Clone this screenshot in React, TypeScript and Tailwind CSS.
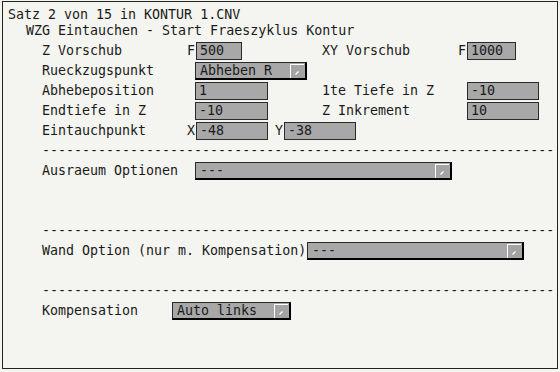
import React from "react";

const F = { fontFamily: '"DejaVu Sans Mono", "Liberation Mono", monospace', fontSize: "13.3px" };

function Input({ value, w }: { value: string; w: string }) {
  return (
    <div className={`h-[18px] ${w} border border-[#2a2a2a] bg-[#a8a8a8] flex items-center pl-[3px] leading-none text-[#1a1a1a]`}>
      {value}
    </div>
  );
}

function Select({ value, w }: { value: string; w: string }) {
  return (
    <div className={`h-[18px] ${w} border border-[#2a2a2a] border-r-2 border-b-2 border-r-black border-b-black bg-[#a8a8a8] flex items-center pl-[4px] leading-none text-[#1a1a1a]`}>
      <span className="flex-1 whitespace-pre">{value}</span>
      <div className="w-[14px] h-[14px] border-l border-t border-l-white border-t-white bg-[#a4a4a4] flex items-end justify-end mr-[1px] mt-[1px]">
        <svg width="13" height="13" viewBox="0 0 13 13">
          <line x1="4.5" y1="9.5" x2="7.5" y2="6.5" stroke="white" strokeWidth="1.3" />
        </svg>
      </div>
    </div>
  );
}

function Dashes() {
  return (
    <div className="h-[20px] flex items-center pl-[39px] overflow-hidden whitespace-pre w-[553px] text-[#1a1a1a] leading-none">
      {"-".repeat(64)}
    </div>
  );
}

function Row({ children }: { children: React.ReactNode }) {
  return <div className="h-[20px] flex items-center whitespace-pre">{children}</div>;
}

export default function App() {
  return (
    <div className="w-[560px] h-[372px] bg-[#f4f4f0] pt-[1px] pl-[2px]" style={F}>
      <div className="w-[556px] h-[368px] border border-[#222] text-[#1a1a1a] flex flex-col pt-[5px]">
        <div className="h-[16px] flex items-center pl-[5px] whitespace-pre leading-none">Satz 2 von 15 in KONTUR 1.CNV</div>
        <div className="h-[16px] flex items-center pl-[23px] whitespace-pre leading-none">WZG Eintauchen - Start Fraeszyklus Kontur</div>
        <div className="h-[2px]" />
        <div className="pl-[39px] flex flex-col leading-none">
          <Row>
            <div className="w-[145px]">Z Vorschub</div>
            <div className="w-[9px]">F</div>
            <Input value="500" w="w-[46px]" />
            <div className="w-[80px]" />
            <div className="w-[136px]">XY Vorschub</div>
            <div className="w-[9px]">F</div>
            <Input value="1000" w="w-[49px]" />
          </Row>
          <Row>
            <div className="w-[153px]">Rueckzugspunkt</div>
            <Select value="Abheben R" w="w-[112px]" />
          </Row>
          <Row>
            <div className="w-[153px]">Abhebeposition</div>
            <Input value="1" w="w-[73px]" />
            <div className="w-[54px]" />
            <div className="w-[145px]">1te Tiefe in Z</div>
            <Input value="-10" w="w-[72px]" />
          </Row>
          <Row>
            <div className="w-[153px]">Endtiefe in Z</div>
            <Input value="-10" w="w-[73px]" />
            <div className="w-[54px]" />
            <div className="w-[145px]">Z Inkrement</div>
            <Input value="10" w="w-[72px]" />
          </Row>
          <Row>
            <div className="w-[145px]">Eintauchpunkt</div>
            <div className="w-[9px]">X</div>
            <Input value="-48" w="w-[72px]" />
            <div className="w-[16px] text-right pr-[1px]">Y</div>
            <Input value="-38" w="w-[72px]" />
          </Row>
        </div>
        <Dashes />
        <div className="pl-[39px] flex flex-col leading-none">
          <Row>
            <div className="w-[153px]">Ausraeum Optionen</div>
            <Select value="---" w="w-[257px]" />
          </Row>
        </div>
        <div className="h-[40px]" />
        <Dashes />
        <div className="pl-[39px] flex flex-col leading-none">
          <Row>
            <div className="w-[265px]">Wand Option (nur m. Kompensation)</div>
            <Select value="---" w="w-[217px]" />
          </Row>
        </div>
        <div className="h-[20px]" />
        <Dashes />
        <div className="pl-[39px] flex flex-col leading-none">
          <Row>
            <div className="w-[130px]">Kompensation</div>
            <Select value="Auto links" w="w-[119px]" />
          </Row>
        </div>
      </div>
    </div>
  );
}
